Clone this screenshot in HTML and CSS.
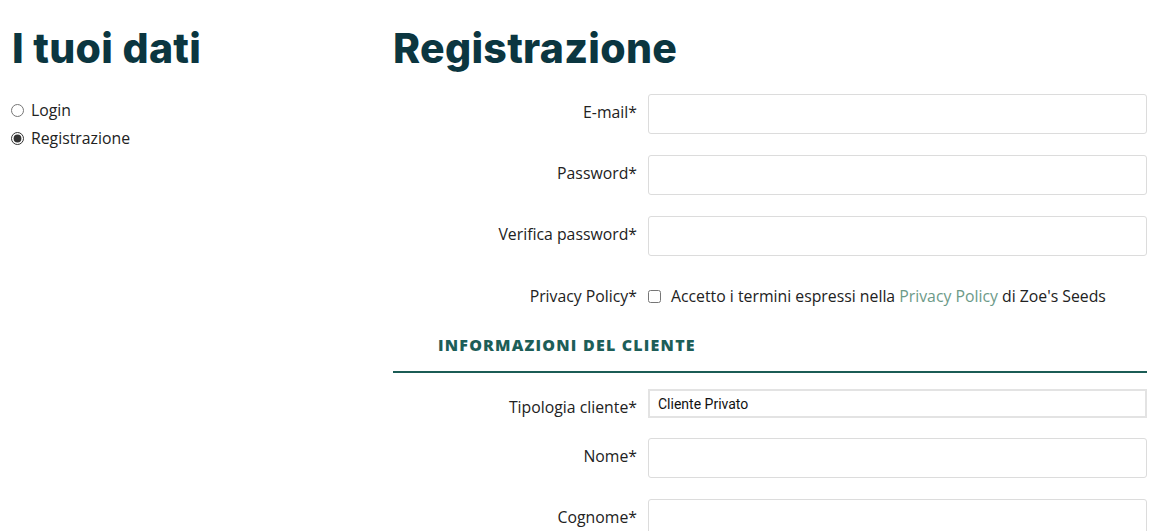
FILE: index.html
```html
<!DOCTYPE html>
<html lang="it">
<head>
    <meta charset="UTF-8">
    <meta name="viewport" content="width=device-width, initial-scale=1.0">
    <title>I tuoi dati - Registrazione</title>
    <link rel="stylesheet" href="styles.css">
</head>
<body>

<div class="page">
    <!-- Colonna sinistra -->
    <aside class="sidebar">
        <h1 class="title">I tuoi dati</h1>
        <label class="radio-row">
            <input type="radio" name="mode" value="login">
            <span>Login</span>
        </label>
        <label class="radio-row">
            <input type="radio" name="mode" value="register" checked>
            <span>Registrazione</span>
        </label>
    </aside>

    <!-- Modulo di registrazione -->
    <main class="content">
        <h1 class="title">Registrazione</h1>
        <form class="reg-form">
            <div class="form-row">
                <label class="form-label" for="email">E-mail*</label>
                <input class="form-input" type="email" id="email">
            </div>
            <div class="form-row">
                <label class="form-label" for="password">Password*</label>
                <input class="form-input" type="password" id="password">
            </div>
            <div class="form-row">
                <label class="form-label" for="password2">Verifica password*</label>
                <input class="form-input" type="password" id="password2">
            </div>
            <div class="form-row privacy-row">
                <span class="form-label">Privacy Policy*</span>
                <label class="check-label">
                    <input type="checkbox" class="check">
                    <span>Accetto i termini espressi nella <a href="#">Privacy Policy</a> di Zoe's Seeds</span>
                </label>
            </div>

            <h2 class="section-title">Informazioni del cliente</h2>

            <div class="form-row select-row">
                <label class="form-label" for="tipo">Tipologia cliente*</label>
                <select class="form-select" id="tipo">
                    <option>Cliente Privato</option>
                    <option>Azienda</option>
                </select>
            </div>
            <div class="form-row">
                <label class="form-label" for="nome">Nome*</label>
                <input class="form-input" type="text" id="nome">
            </div>
            <div class="form-row">
                <label class="form-label" for="cognome">Cognome*</label>
                <input class="form-input" type="text" id="cognome">
            </div>
        </form>
    </main>
</div>

</body>
</html>
```

FILE: styles.css
```css
body {
    margin: 0;
    padding: 0;
    background: #fff;
    color: #222;
    font-family: 'Open Sans', 'Noto Sans', Arial, sans-serif;
    font-size: 15.8px;
}
.page {
    display: flex;
    padding: 0 21px 0 12px;
}
.sidebar {
    width: 381px;
    flex-shrink: 0;
}
.content {
    flex: 1;
}
.title {
    margin: 24px 0 22px;
    font-family: 'Inter', 'DejaVu Sans', sans-serif;
    font-weight: 800;
    font-size: 41px;
    line-height: 48px;
    color: #0b3640;
    letter-spacing: 0.3px;
}
.sidebar .title {
    margin-bottom: 24px;
}
.radio-row {
    display: flex;
    align-items: center;
    gap: 7px;
    height: 28px;
    margin-left: -1px;
}
.radio-row input {
    margin: 0;
    width: 13px;
    height: 13px;
    accent-color: #333;
}

/* form */
.reg-form {
    display: flex;
    flex-direction: column;
}
.form-row {
    display: flex;
    align-items: flex-start;
    margin-bottom: 21px;
}
.form-label {
    width: 244px;
    padding: 7px 11px 0 0;
    line-height: 22px;
    text-align: right;
    flex-shrink: 0;
}
.form-input {
    flex: 1;
    height: 40px;
    box-sizing: border-box;
    border: 1px solid #dcdcdc;
    border-radius: 3px;
    padding: 0 10px;
    font: inherit;
}
.privacy-row {
    align-items: center;
    height: 38px;
    margin-bottom: 22px;
}
.privacy-row .form-label {
    padding-top: 0;
}
.check-label {
    display: flex;
    align-items: center;
    gap: 10px;
}
.check {
    margin: 0;
    width: 13px;
    height: 13px;
}
.check-label a {
    color: #6c9a88;
    text-decoration: none;
}
.section-title {
    margin: -2px 0 16px;
    padding: 0 0 16px 45px;
    border-bottom: 2px solid #1b5c55;
    font-size: 16px;
    font-weight: 800;
    letter-spacing: 1.2px;
    text-transform: uppercase;
    color: #1d5e58;
    line-height: 20px;
}
.select-row {
    margin-bottom: 20px;
}
.form-select {
    flex: 1;
    height: 29px;
    box-sizing: border-box;
    border: 2px solid #e3e3e3;
    border-radius: 0;
    background: #fff;
    padding: 0 8px;
    font-family: 'Roboto', Arial, sans-serif;
    font-size: 14px;
    color: #111;
    appearance: none;
}
```
